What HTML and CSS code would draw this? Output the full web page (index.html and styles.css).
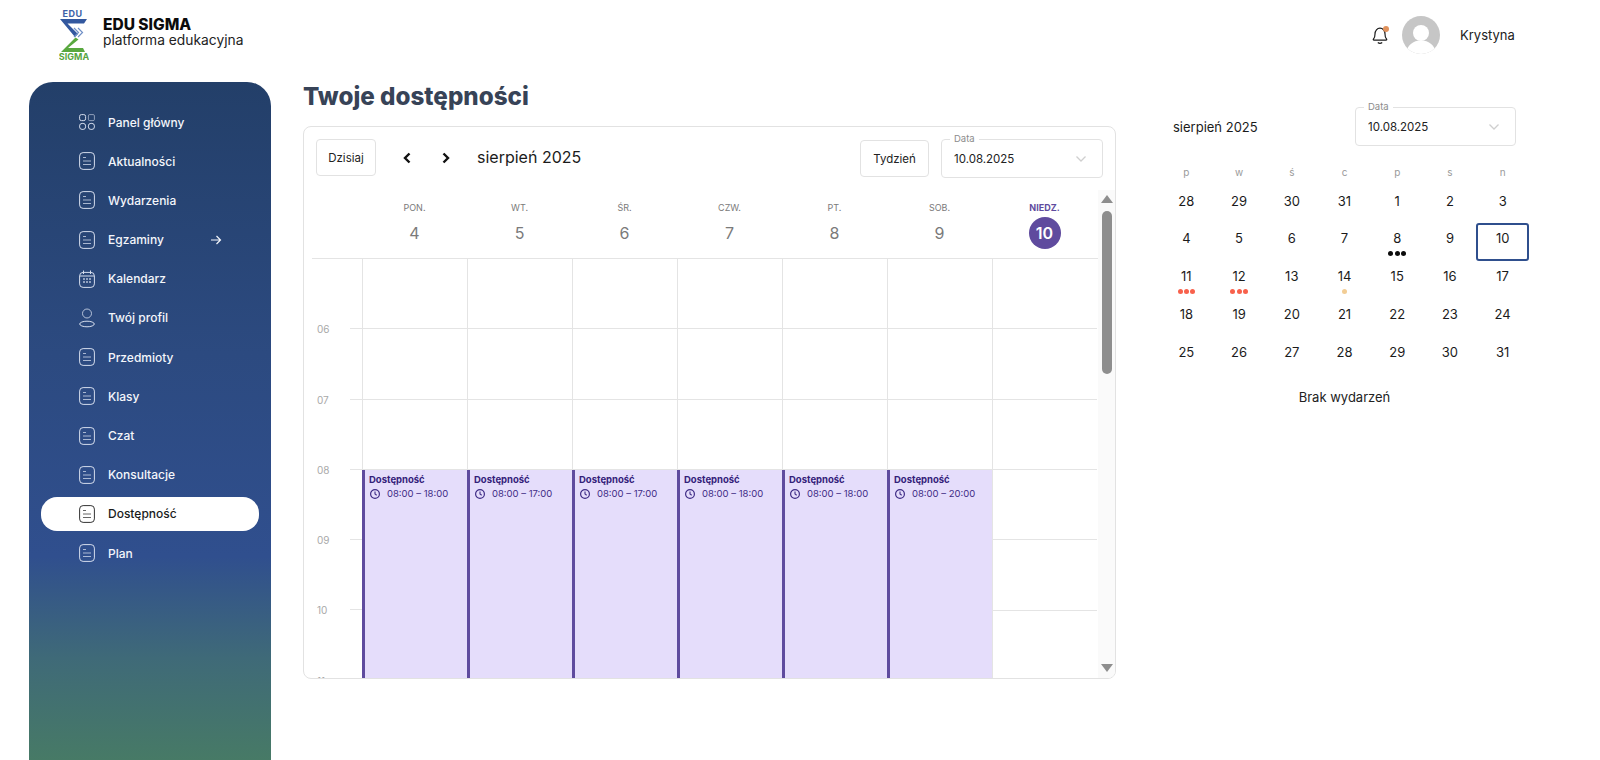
FILE: index.html
```html
<!DOCTYPE html>
<html lang="pl">
<head>
    <meta charset="UTF-8">
    <meta name="viewport" content="width=device-width, initial-scale=1.0">
    <title>Twoje dostępności</title>
    <link rel="stylesheet" href="styles.css">
</head>
<body>
    <svg class="icon-defs" width="0" height="0">
        <symbol id="doc" viewBox="0 0 16 18">
            <rect x="0.6" y="0.6" width="14.8" height="16.8" rx="3.5" fill="none" stroke="currentColor" stroke-width="1"/>
            <path d="M4 5.5h3M4 9h8M4 12.5h8" fill="none" stroke="currentColor" stroke-width="1" opacity="0.75"/>
        </symbol>
        <symbol id="clock" viewBox="0 0 12 12">
            <circle cx="6" cy="6" r="4.4" fill="none" stroke="currentColor" stroke-width="1.2"/>
            <path d="M6 3.4V6l1.7 1.2" fill="none" stroke="currentColor" stroke-width="1.1"/>
        </symbol>
        <symbol id="caret" viewBox="0 0 12 8">
            <path d="M1.5 1.5 6 6l4.5-4.5" fill="none" stroke="currentColor" stroke-width="1.3"/>
        </symbol>
    </svg>

    <header class="topbar">
        <div class="brand">
            <svg class="logo" viewBox="0 0 30 52" width="30" height="52">
                <text class="logo-edu" x="13.5" y="8" text-anchor="middle">EDU</text>
                <path d="M1 10H28L25 14.500H8.500L19 25 16 28z" fill="#33589f"/>
                <path d="M15 19l4.500 4.500-4.500 4.500M19 19l4.500 4.500-4.500 4.500" fill="none" stroke="#6f8fc6" stroke-width="1.2"/>
                <path d="M16.500 28.500 19.500 30.500 9 39H24L26 43H2z" fill="#59a83f"/>
                <text class="logo-sigma" x="15" y="50.500" text-anchor="middle">SIGMA</text>
            </svg>
            <div class="brand-text">
                <div class="brand-name">EDU SIGMA</div>
                <div class="brand-sub">platforma edukacyjna</div>
            </div>
        </div>
        <div class="user-box">
            <div class="bell">
                <svg viewBox="0 0 18 20" width="18" height="20">
                    <path d="M2.5 14c1.300-1.200 1.500-2.500 1.500-5 0-3.300 2.200-5.800 5-5.800s5 2.500 5 5.800c0 2.500.2 3.800 1.500 5 .5.500.2 1.200-.5 1.200H3c-.7 0-1-.7-.5-1.200z" fill="none" stroke="#1c1c1c" stroke-width="1.2"/>
                    <path d="M6.800 17.500c1.300 1.100 3.100 1.100 4.400 0" fill="none" stroke="#1c1c1c" stroke-width="1.2"/>
                </svg>
                <span class="bell-dot"></span>
            </div>
            <svg class="avatar" viewBox="0 0 38 38" width="38" height="38">
                <defs><clipPath id="avatar-clip"><circle cx="19" cy="19" r="19"/></clipPath></defs>
                <circle cx="19" cy="19" r="19" fill="#c6c6c6"/>
                <g clip-path="url(#avatar-clip)">
                    <circle cx="19" cy="17" r="8" fill="#fff"/>
                    <path d="M4 38c1-9 7-13.500 15-13.500S33 29 34 38z" fill="#fff"/>
                </g>
            </svg>
            <span class="user-name">Krystyna</span>
        </div>
    </header>

    <div class="layout">
        <nav class="sidebar">
            <a class="nav-item">
                <svg class="nav-icon" viewBox="0 0 16 16" width="16" height="16">
                    <rect x="0.6" y="0.6" width="6" height="6" rx="1.8" fill="none" stroke="currentColor"/>
                    <rect x="9.4" y="0.6" width="6" height="6" rx="1.2" fill="none" stroke="currentColor" opacity="0.6"/>
                    <rect x="0.6" y="9.4" width="6" height="6" rx="2.5" fill="none" stroke="currentColor"/>
                    <rect x="9.4" y="9.4" width="6" height="6" rx="2.5" fill="none" stroke="currentColor"/>
                </svg>
                <span>Panel główny</span>
            </a>
            <a class="nav-item"><svg class="nav-icon" width="16" height="18"><use href="#doc"/></svg><span>Aktualności</span></a>
            <a class="nav-item"><svg class="nav-icon" width="16" height="18"><use href="#doc"/></svg><span>Wydarzenia</span></a>
            <a class="nav-item">
                <svg class="nav-icon" width="16" height="18"><use href="#doc"/></svg><span>Egzaminy</span>
                <svg class="nav-arrow" viewBox="0 0 12 12" width="12" height="12"><path d="M1 6h9.500M6.500 2l4 4-4 4" fill="none" stroke="currentColor" stroke-width="1.2"/></svg>
            </a>
            <a class="nav-item">
                <svg class="nav-icon" viewBox="0 0 16 18" width="16" height="18">
                    <rect x="0.6" y="2.4" width="14.8" height="15" rx="3.5" fill="none" stroke="currentColor"/>
                    <path d="M4.500 0.500v3.500M11.500 0.500v3.500M1 6h14" fill="none" stroke="currentColor"/>
                    <path d="M4 9h2M7 9h2M10 9h2M4 12h2M7 12h2M10 12h2" fill="none" stroke="currentColor" stroke-width="1.5" opacity="0.8"/>
                </svg>
                <span>Kalendarz</span>
            </a>
            <a class="nav-item">
                <svg class="nav-icon" viewBox="0 0 16 20" width="16" height="20">
                    <circle cx="8" cy="5.5" r="4.5" fill="none" stroke="currentColor" opacity="0.8"/>
                    <ellipse cx="8" cy="16" rx="7.3" ry="2.8" fill="none" stroke="currentColor"/>
                </svg>
                <span>Twój profil</span>
            </a>
            <a class="nav-item"><svg class="nav-icon" width="16" height="18"><use href="#doc"/></svg><span>Przedmioty</span></a>
            <a class="nav-item"><svg class="nav-icon" width="16" height="18"><use href="#doc"/></svg><span>Klasy</span></a>
            <a class="nav-item"><svg class="nav-icon" width="16" height="18"><use href="#doc"/></svg><span>Czat</span></a>
            <a class="nav-item"><svg class="nav-icon" width="16" height="18"><use href="#doc"/></svg><span>Konsultacje</span></a>
            <a class="nav-item active"><svg class="nav-icon" width="16" height="18"><use href="#doc"/></svg><span>Dostępność</span></a>
            <a class="nav-item"><svg class="nav-icon" width="16" height="18"><use href="#doc"/></svg><span>Plan</span></a>
        </nav>

        <main class="main">
            <h1 class="page-title">Twoje dostępności</h1>
            <div class="calendar-card">
                <div class="toolbar">
                    <button class="tool-button today-button">Dzisiaj</button>
                    <div class="arrows">
                        <svg viewBox="0 0 10 12" width="10" height="12"><path d="M7.500 1.500 3 6l4.500 4.500" fill="none" stroke="#111" stroke-width="2.4"/></svg>
                        <svg viewBox="0 0 10 12" width="10" height="12"><path d="M2.500 1.500 7 6l-4.500 4.500" fill="none" stroke="#111" stroke-width="2.4"/></svg>
                    </div>
                    <div class="toolbar-title">sierpień 2025</div>
                    <button class="tool-button week-button">Tydzień</button>
                    <div class="date-select toolbar-select">
                        <span class="date-label">Data</span>
                        <span>10.08.2025</span>
                        <svg class="date-caret" width="12" height="8"><use href="#caret"/></svg>
                    </div>
                </div>
                <div class="week-wrap">
                    <div class="week-view">
                        <div class="week-head">
                            <div class="gutter-head"></div>
                            <div class="day-head"><span class="day-name">PON.</span><span class="day-num">4</span></div>
                            <div class="day-head"><span class="day-name">WT.</span><span class="day-num">5</span></div>
                            <div class="day-head"><span class="day-name">ŚR.</span><span class="day-num">6</span></div>
                            <div class="day-head"><span class="day-name">CZW.</span><span class="day-num">7</span></div>
                            <div class="day-head"><span class="day-name">PT.</span><span class="day-num">8</span></div>
                            <div class="day-head"><span class="day-name">SOB.</span><span class="day-num">9</span></div>
                            <div class="day-head today-head"><span class="day-name">NIEDZ.</span><span class="day-num">10</span></div>
                        </div>
                        <div class="week-body">
                            <div class="gutter">
                                <div class="hour">06</div>
                                <div class="hour">07</div>
                                <div class="hour">08</div>
                                <div class="hour">09</div>
                                <div class="hour">10</div>
                                <div class="hour">11</div>
                            </div>
                            <div class="day-col"><div class="event"><div class="event-title">Dostępność</div><div class="event-time"><svg width="12" height="12"><use href="#clock"/></svg>08:00 – 18:00</div></div></div>
                            <div class="day-col"><div class="event"><div class="event-title">Dostępność</div><div class="event-time"><svg width="12" height="12"><use href="#clock"/></svg>08:00 – 17:00</div></div></div>
                            <div class="day-col"><div class="event"><div class="event-title">Dostępność</div><div class="event-time"><svg width="12" height="12"><use href="#clock"/></svg>08:00 – 17:00</div></div></div>
                            <div class="day-col"><div class="event"><div class="event-title">Dostępność</div><div class="event-time"><svg width="12" height="12"><use href="#clock"/></svg>08:00 – 18:00</div></div></div>
                            <div class="day-col"><div class="event"><div class="event-title">Dostępność</div><div class="event-time"><svg width="12" height="12"><use href="#clock"/></svg>08:00 – 18:00</div></div></div>
                            <div class="day-col"><div class="event"><div class="event-title">Dostępność</div><div class="event-time"><svg width="12" height="12"><use href="#clock"/></svg>08:00 – 20:00</div></div></div>
                            <div class="day-col"></div>
                        </div>
                    </div>
                    <div class="scrollbar">
                        <span class="scroll-up"></span>
                        <span class="scroll-thumb"></span>
                        <span class="scroll-down"></span>
                    </div>
                </div>
            </div>
        </main>

        <aside class="aside">
            <div class="mini-head">
                <div class="mini-title">sierpień 2025</div>
                <div class="date-select">
                    <span class="date-label">Data</span>
                    <span>10.08.2025</span>
                    <svg class="date-caret" width="12" height="8"><use href="#caret"/></svg>
                </div>
            </div>
            <div class="mini-weekdays">
                <span>p</span><span>w</span><span>ś</span><span>c</span><span>p</span><span>s</span><span>n</span>
            </div>
            <div class="mini-days">
                <div class="mini-day">28</div><div class="mini-day">29</div><div class="mini-day">30</div><div class="mini-day">31</div><div class="mini-day">1</div><div class="mini-day">2</div><div class="mini-day">3</div>
                <div class="mini-day">4</div><div class="mini-day">5</div><div class="mini-day">6</div><div class="mini-day">7</div>
                <div class="mini-day">8<div class="dots"><i class="black"></i><i class="black"></i><i class="black"></i></div></div>
                <div class="mini-day">9</div><div class="mini-day selected">10</div>
                <div class="mini-day">11<div class="dots"><i class="red"></i><i class="red"></i><i class="red"></i></div></div>
                <div class="mini-day">12<div class="dots"><i class="red"></i><i class="red"></i><i class="red"></i></div></div>
                <div class="mini-day">13</div>
                <div class="mini-day">14<div class="dots"><i class="sand"></i></div></div>
                <div class="mini-day">15</div><div class="mini-day">16</div><div class="mini-day">17</div>
                <div class="mini-day">18</div><div class="mini-day">19</div><div class="mini-day">20</div><div class="mini-day">21</div><div class="mini-day">22</div><div class="mini-day">23</div><div class="mini-day">24</div>
                <div class="mini-day">25</div><div class="mini-day">26</div><div class="mini-day">27</div><div class="mini-day">28</div><div class="mini-day">29</div><div class="mini-day">30</div><div class="mini-day">31</div>
            </div>
            <div class="no-events">Brak wydarzeń</div>
        </aside>
    </div>
</body>
</html>
```

FILE: styles.css
```css
* {
    box-sizing: border-box;
}
body {
    font-family: Inter, "Open Sans", sans-serif;
    background-color: white;
    color: #1a1a1a;
    margin: 0;
    height: 760px;
    overflow: hidden;
}
.icon-defs {
    display: block;
    height: 0;
}
.topbar {
    height: 82px;
    display: flex;
    justify-content: space-between;
    padding: 9px 76px 0 59px;
}
.brand {
    display: flex;
    align-items: flex-start;
    gap: 14px;
}
.logo-edu {
    font-size: 9px;
    font-weight: 700;
    letter-spacing: 0.5px;
    fill: #3d62a8;
}
.logo-sigma {
    font-size: 9px;
    font-weight: 700;
    fill: #58a53f;
}
.brand-text {
    padding-top: 7px;
}
.brand-name {
    font-size: 15.5px;
    font-weight: 800;
    line-height: 17px;
    color: #0c0c0c;
}
.brand-sub {
    font-size: 13.8px;
    line-height: 14px;
    color: #222;
}
.user-box {
    display: flex;
    align-items: center;
    height: 52px;
}
.bell {
    position: relative;
    width: 18px;
    height: 20px;
    margin-right: 13px;
}
.bell-dot {
    position: absolute;
    top: 1px;
    right: 0;
    width: 6px;
    height: 6px;
    border-radius: 50%;
    background-color: #e0915c;
}
.avatar {
    margin-right: 20px;
}
.user-name {
    font-size: 13px;
    width: 64px;
    color: #222;
}

.layout {
    display: flex;
    padding-left: 29px;
}
.sidebar {
    width: 242px;
    height: 678px;
    flex-shrink: 0;
    border-radius: 24px 24px 0 0;
    background: linear-gradient(180deg, #233f69 0%, #2c4a80 40%, #304f8e 70%, #3f6a78 85%, #477a66 100%);
    padding-top: 23px;
    display: flex;
    flex-direction: column;
    align-items: center;
}
.nav-item {
    width: 218px;
    height: 34px;
    margin-bottom: 5.2px;
    padding-left: 38px;
    border-radius: 16px;
    display: flex;
    align-items: center;
    font-size: 12px;
    font-weight: 500;
    color: #f4f6fb;
}
.nav-icon {
    width: 16px;
    flex-shrink: 0;
    margin-right: 13px;
    color: #d5dded;
}
.nav-arrow {
    margin-left: 46px;
}
.nav-item.active {
    background-color: white;
    color: #1b1b1b;
}
.nav-item.active .nav-icon {
    color: #333;
}

.main {
    width: 813px;
    margin-left: 32px;
    flex-shrink: 0;
}
.page-title {
    font-size: 24.2px;
    font-weight: 800;
    line-height: 30px;
    color: #374357;
    margin: 0 0 14px 0;
}
.calendar-card {
    height: 553px;
    border: 1px solid #e2e2e2;
    border-radius: 8px;
    overflow: hidden;
}
.toolbar {
    height: 63px;
    padding: 12px 12px 0 12px;
    display: flex;
    align-items: flex-start;
}
.tool-button {
    font-family: inherit;
    font-size: 11.5px;
    color: #222;
    background-color: white;
    border: 1px solid #e2e2e2;
    border-radius: 4px;
    height: 37px;
    padding: 0;
}
.today-button {
    width: 60px;
}
.week-button {
    width: 69px;
    margin: 1px 12px 0 0;
}
.arrows {
    display: flex;
    gap: 29px;
    height: 37px;
    align-items: center;
    margin: 0 26px;
}
.toolbar-title {
    font-size: 16px;
    line-height: 37px;
    color: #1b1b1b;
    flex: 1;
}
.date-select {
    position: relative;
    width: 161px;
    height: 39px;
    border: 1px solid #e2e2e2;
    border-radius: 4px;
    padding: 0 12px;
    display: flex;
    align-items: center;
    justify-content: space-between;
    font-size: 11.5px;
    color: #222;
}
.toolbar-select {
    width: 162px;
}
.date-label {
    position: absolute;
    top: -7px;
    left: 8px;
    padding: 0 4px;
    background-color: white;
    font-size: 9.5px;
    line-height: 12px;
    color: #8c8c8c;
}
.date-caret {
    color: #cfcfcf;
    margin-right: 3px;
}

.week-wrap {
    display: flex;
    height: 488px;
}
.week-view {
    width: 794px;
    flex-shrink: 0;
}
.week-head {
    display: flex;
    height: 69px;
    border-bottom: 1px solid #e4e4e4;
    margin-left: 8px;
}
.gutter-head {
    width: 50px;
}
.day-head {
    width: 105px;
    display: flex;
    flex-direction: column;
    align-items: center;
    padding-top: 12px;
    color: #7a7a7a;
}
.day-name {
    font-size: 9px;
    line-height: 12px;
}
.day-num {
    font-size: 16px;
    line-height: 32px;
    margin-top: 3px;
}
.today-head .day-name {
    font-weight: 700;
    color: #5f4b9e;
}
.today-head .day-num {
    width: 32px;
    height: 32px;
    border-radius: 50%;
    background-color: #5f4b9e;
    color: white;
    font-weight: 600;
    text-align: center;
}
.week-body {
    display: flex;
    height: 419px;
    overflow: hidden;
}
.gutter {
    width: 58px;
    flex-shrink: 0;
    padding-top: 70.3px;
}
.hour {
    height: 70.3px;
    padding-left: 13px;
    font-size: 10px;
    line-height: 0;
    color: #a8a8a8;
    position: relative;
}
.hour::after {
    content: "";
    position: absolute;
    top: -1px;
    right: 0;
    width: 12px;
    height: 1px;
    background-color: #e4e4e4;
}
.day-col {
    width: 105px;
    flex-shrink: 0;
    display: flex;
    flex-direction: column;
    border-left: 1px solid #e4e4e4;
    background: repeating-linear-gradient(180deg, white 0, white 69.3px, #e4e4e4 69.3px, #e4e4e4 70.3px);
}
.event {
    flex: 1;
    margin-top: 211px;
    margin-left: -1px;
    border-left: 3px solid #5f4b9e;
    background-color: #e5ddfb;
    padding: 4px 4px;
    color: #3f2c86;
}
.event-title {
    font-size: 9.5px;
    font-weight: 700;
    line-height: 12px;
    color: #34217a;
}
.event-time {
    display: flex;
    align-items: center;
    gap: 6px;
    font-size: 9.5px;
    line-height: 16px;
}
.scrollbar {
    width: 18px;
    display: flex;
    flex-direction: column;
    align-items: center;
    background-color: #fafafa;
    padding-top: 5px;
}
.scroll-up {
    width: 0;
    height: 0;
    border-left: 6px solid transparent;
    border-right: 6px solid transparent;
    border-bottom: 8px solid #8e8e8e;
}
.scroll-thumb {
    width: 10px;
    height: 163px;
    margin-top: 8px;
    border-radius: 5px;
    background-color: #8e8e8e;
}
.scroll-down {
    width: 0;
    height: 0;
    margin-top: auto;
    margin-bottom: 6px;
    border-left: 6px solid transparent;
    border-right: 6px solid transparent;
    border-top: 8px solid #8e8e8e;
}

.aside {
    width: 369px;
    margin-left: 44px;
    flex-shrink: 0;
    padding-top: 25px;
}
.mini-head {
    display: flex;
    justify-content: space-between;
    align-items: center;
    padding: 0 13px;
}
.mini-title {
    font-size: 13px;
    color: #1b1b1b;
}
.mini-weekdays {
    display: grid;
    grid-template-columns: repeat(7, 1fr);
    height: 23.5px;
    margin-top: 16px;
    text-align: center;
    font-size: 10px;
    line-height: 20px;
    color: #9a9a9a;
}
.mini-days {
    display: grid;
    grid-template-columns: repeat(7, 1fr);
    grid-auto-rows: 37.75px;
}
.mini-day {
    display: flex;
    flex-direction: column;
    align-items: center;
    padding-top: 6px;
    font-size: 13px;
    line-height: 19px;
    color: #1b1b1b;
}
.mini-day.selected {
    border: 2px solid #2f4f8d;
    border-radius: 3px;
    padding-top: 4px;
    height: 38px;
}
.dots {
    display: flex;
    gap: 1.3px;
    margin-top: 3px;
}
.dots i {
    width: 5px;
    height: 5px;
    border-radius: 50%;
}
.dots .black {
    background-color: #0c0c0c;
}
.dots .red {
    background-color: #f8614c;
}
.dots .sand {
    background-color: #f2cd95;
}
.no-events {
    margin-top: 13px;
    text-align: center;
    font-size: 13px;
    line-height: 20px;
    color: #222;
}
```
